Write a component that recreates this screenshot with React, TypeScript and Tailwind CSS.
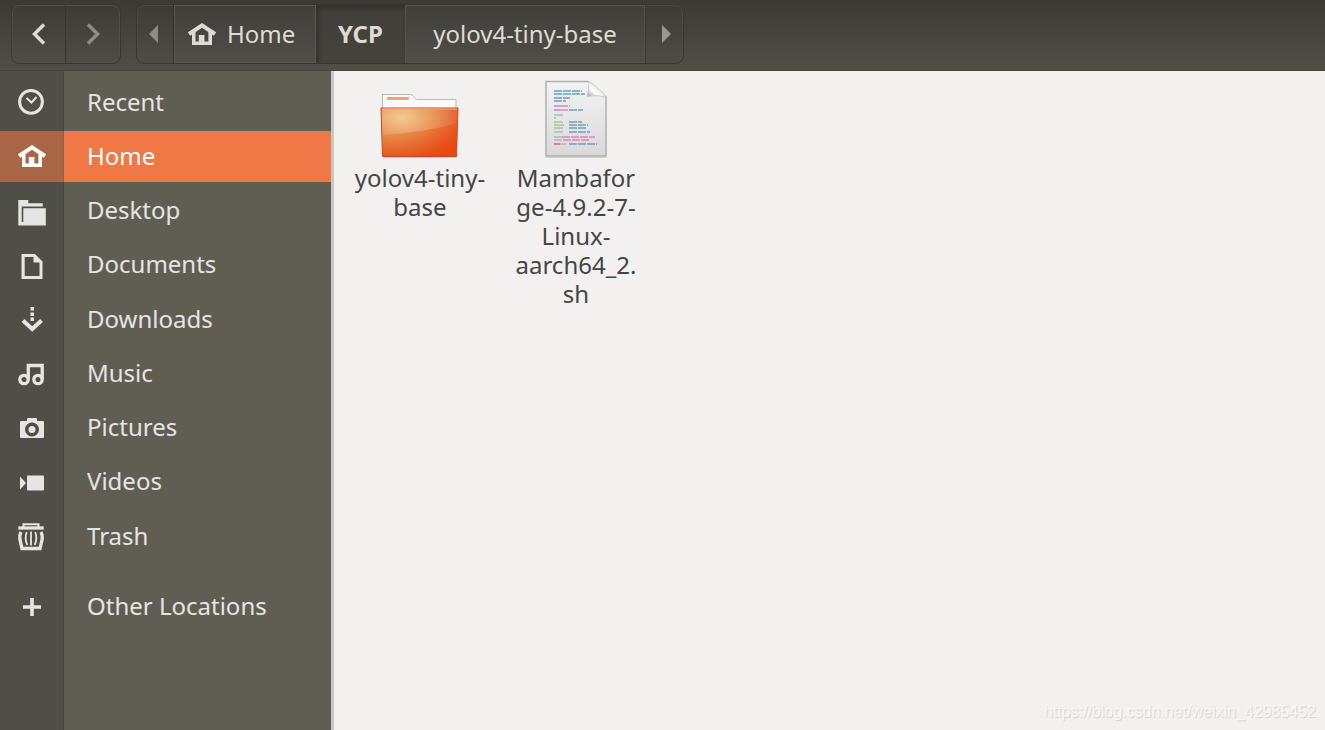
import type { ReactNode } from "react";

const places: { label: string; icon: ReactNode; active?: boolean }[] = [
  {
    label: "Recent",
    icon: (
      <g fill="none" stroke="currentColor">
        <circle cx="16" cy="15.800" r="11.400" strokeWidth="3" />
        <path d="M11.500 12l5 4.500 5-5.500" strokeWidth="2" />
      </g>
    )
  },
  { label: "Home", icon: <HouseShape />, active: true },
  {
    label: "Desktop",
    icon: (
      <path d="M3.300 5h10v3.200h14.400v3.300H6.700V27h1.600V13.300h22.500v17.200H3.300z" />
    )
  },
  {
    label: "Documents",
    icon: <path fillRule="evenodd" d="M6.500 5H20l7.500 7.500V30h-21zM9.700 8v19h14.800V13.500H18.500V8z" />
  },
  {
    label: "Downloads",
    icon: (
      <g>
        <path d="M15.500 4h3.500v3.500h-3.500zM15.500 9.500h3.500V13h-3.500zM15.500 14.500h3.500V18h-3.500z" />
        <path d="M8 17.500l9.200 8.500 9.300-8.500" fill="none" stroke="currentColor" strokeWidth="4" />
      </g>
    )
  },
  {
    label: "Music",
    icon: (
      <g fill="none" stroke="currentColor" strokeWidth="3.300">
        <circle cx="9" cy="22.500" r="4.200" />
        <circle cx="23" cy="22.500" r="4.200" />
        <path d="M13.300 22.500V8.500H27.200V22.500" />
      </g>
    )
  },
  {
    label: "Pictures",
    icon: (
      <path
        fillRule="evenodd"
        d="M6 9h6V7q0-1 1-1h8q1 0 1 1v2h6q1 0 1 1v15q0 1-1 1H6q-1 0-1-1V10q0-1 1-1zM17 10.500a7 7 0 100 14 7 7 0 000-14zM17 14a3.500 3.500 0 110 7 3.500 3.500 0 010-7z"
      />
    )
  },
  {
    label: "Videos",
    icon: <path d="M5 10.500l6 6.500-6 6.500zM13 9.500h15q1 0 1 1v13q0 1-1 1H13q-1 0-1-1v-13q0-1 1-1z" />
  },
  {
    label: "Trash",
    icon: (
      <g fill="none" stroke="currentColor">
        <path d="M8.500 7V4.200h15V7" strokeWidth="2" />
        <path d="M3.300 8h25.400" strokeWidth="3.300" />
        <path d="M6 12q-1.800 3-1 8l2 8.500h18l2-8.500q0.800-5-1-8" strokeWidth="3.300" />
        <path d="M11.800 12q-2.600 6 0.500 13M16 11.500v14M20.200 12q2.600 6-0.500 13" strokeWidth="1.800" />
      </g>
    )
  }
];

const codeLines: [number, number, number, string][] = [
  [8, 11, 28, "#6ba0bd"],
  [8, 14, 31, "#6ba0bd"],
  [8, 18, 16, "#6ba0bd"],
  [8, 21, 12, "#6ba0bd"],
  [8, 26, 6, "#b98bd4"],
  [14, 26, 10, "#d98bb0"],
  [8, 30, 6, "#b98bd4"],
  [14, 30, 8, "#d98bb0"],
  [23, 30, 14, "#6ba0bd"],
  [8, 35, 4, "#8fd48b"],
  [12, 35, 5, "#b5b5b5"],
  [8, 38, 2, "#b5b5b5"],
  [8, 42, 5, "#8fd48b"],
  [13, 42, 4, "#b5b5b5"],
  [23, 42, 13, "#6ba0bd"],
  [8, 45, 5, "#8fd48b"],
  [13, 45, 5, "#b5b5b5"],
  [23, 45, 19, "#6ba0bd"],
  [8, 48, 5, "#8fd48b"],
  [13, 48, 4, "#b5b5b5"],
  [23, 48, 18, "#6ba0bd"],
  [8, 52, 5, "#8fd48b"],
  [13, 52, 4, "#b5b5b5"],
  [23, 52, 21, "#6ba0bd"],
  [8, 57, 8, "#b5b5b5"],
  [16, 57, 33, "#d98bb0"],
  [8, 60, 9, "#b5b5b5"],
  [17, 60, 27, "#d98bb0"],
  [8, 64, 6, "#ee5a5a"],
  [14, 64, 6, "#b5b5b5"],
  [23, 64, 28, "#6ba0bd"]
];

function HouseShape() {
  return (
    <g>
      <path d="M4 16L17 7.300 30 16" fill="none" stroke="currentColor" strokeWidth="4" />
      <path d="M7 14h3.500v9.500h3.300V17h5.600v6.500h4V14h3.600v13H7z" />
    </g>
  );
}

function Icon({ children }: { children: ReactNode }) {
  return (
    <svg viewBox="0 0 33 33" className="size-[33px] shrink-0" fill="currentColor" aria-hidden="true">
      {children}
    </svg>
  );
}

function PlaceRow({ label, icon, active = false }: { label: string; icon: ReactNode; active?: boolean }) {
  return (
    <li>
      <a
        href={`#${label}`}
        className={`grid h-[51px] grid-cols-[64px_1fr] items-center ${
          active
            ? "bg-[linear-gradient(to_right,#a96647_63px,#9c5c3e_63px,#9c5c3e_64px,#f07746_64px)] text-white"
            : "text-[#e5e5e3]"
        }`}
      >
        <span className="pl-[15px]">
          <Icon>{icon}</Icon>
        </span>
        <span className="pb-0.5 pl-[23px]">{label}</span>
      </a>
    </li>
  );
}

function FolderArt() {
  return (
    <svg viewBox="0 0 80 80" className="size-20" aria-hidden="true">
      <defs>
        <radialGradient id="folder" cx="0.27" cy="0.2" r="0.95">
          <stop offset="0" stopColor="#f3cb91" />
          <stop offset="0.45" stopColor="#e8965a" />
          <stop offset="0.85" stopColor="#e8562a" />
          <stop offset="1" stopColor="#e0501c" />
        </radialGradient>
        <linearGradient id="gloss" x1="0" y1="0" x2="1" y2="0.6">
          <stop offset="0" stopColor="#dc7a28" stopOpacity="0.300" />
          <stop offset="1" stopColor="#ea4408" stopOpacity="0.600" />
        </linearGradient>
      </defs>
      <rect x="3" y="77" width="74" height="2" rx="1" fill="#cfcecd" />
      <path d="M2.500 32V15.500h28q2 0 3 2t3 3h39.500V32z" fill="#fafafa" stroke="#b9b8b7" />
      <rect x="7" y="18" width="22" height="3" rx="1" fill="#f0a270" />
      <path d="M1 29h77l-1.500 48.500h-74z" fill="url(#folder)" stroke="#c4481d" />
      <path d="M2 56Q46 53 77 44L76 77H3z" fill="url(#gloss)" />
      <path d="M2 30h75" stroke="#f3b08a" />
    </svg>
  );
}

function ScriptArt() {
  return (
    <svg viewBox="0 0 62 80" className="h-20 w-[62px]" aria-hidden="true">
      <defs>
        <linearGradient id="paper" x1="0" y1="0" x2="0" y2="1">
          <stop offset="0" stopColor="#f3f3f3" />
          <stop offset="1" stopColor="#d9d9d9" />
        </linearGradient>
        <linearGradient id="curl" x1="0.1" y1="0.9" x2="0.8" y2="0.3">
          <stop offset="0" stopColor="#b4b4b4" />
          <stop offset="0.4" stopColor="#ffffff" />
          <stop offset="1" stopColor="#d9d9d9" />
        </linearGradient>
      </defs>
      <path d="M0 78h62v1H0z" fill="#d5d4d3" />
      <path d="M1 2.500h42L61 18V77H1z" fill="url(#paper)" stroke="#aeb0ac" strokeWidth="1.500" />
      {codeLines.map(([x, y, width, color]) => (
        <path key={`${x}-${y}`} d={`M${x + 1} ${y + 1}h${width}`} stroke={color} strokeWidth="1.500" strokeDasharray="8 1" />
      ))}
      <path d="M43 2.500q2 6-1 15 12-2 19 1-2-5-8-9-5-5-10-7z" fill="url(#curl)" stroke="#b9b9b9" strokeWidth="0.700" />
    </svg>
  );
}

function FileItem({ art, name }: { art: ReactNode; name: string }) {
  return (
    <a href="#file" className="flex w-[156px] flex-col items-center text-center leading-[29px] text-[#454545]">
      {art}
      <span className="mt-1 w-[133px] wrap-anywhere">{name}</span>
    </a>
  );
}

function Header() {
  return (
    <header className="flex h-[71px] items-start gap-[15px] border-b border-[#45443d] bg-linear-to-b from-[#3b3a36] to-[#504e46] pt-[4px] pl-[11px] text-[#dfdbd2]">
      <div className="flex h-[60px] rounded-lg border border-[#373631] inset-shadow-[0_0_0_1px_#514f48]">
        <button aria-label="Back" className="flex w-[54px] items-center justify-center border-r border-[#373631]">
          <svg viewBox="0 0 14 22" className="h-[22px] w-[14px]" fill="none" stroke="currentColor" strokeWidth="3.500" aria-hidden="true">
            <path d="M12 1.500L2.500 11l9.500 9.500" />
          </svg>
        </button>
        <button aria-label="Forward" className="flex w-[54px] items-center justify-center text-[#8f8c84]">
          <svg viewBox="0 0 14 22" className="h-[22px] w-[14px]" fill="none" stroke="currentColor" strokeWidth="3.500" aria-hidden="true">
            <path d="M2 1.500L11.500 11 2 20.500" />
          </svg>
        </button>
      </div>
      <nav className="flex h-[60px] rounded-lg border border-[#373631] inset-shadow-[0_0_0_1px_#4c4a43]">
        <button aria-label="Scroll path left" className="flex w-[36px] items-center justify-center pr-1 text-[#8f8c84]">
          <svg viewBox="0 0 10 18" className="h-[18px] w-[10px]" fill="currentColor" aria-hidden="true">
            <path d="M10 0v18L1 9z" />
          </svg>
        </button>
        <button className="flex w-[143px] items-center border-l border-[#302f2b] bg-linear-to-b from-[#403f3a] to-[#504e47] pl-[11px] inset-shadow-[0_0_0_1px_#5b5951]">
          <Icon>
            <HouseShape />
          </Icon>
          <span className="pl-[9px]">Home</span>
        </button>
        <button className="w-[89px] bg-linear-to-b from-[#403f39] to-[#45433c] font-bold inset-shadow-[2px_3px_5px_#302f2b]">
          YCP
        </button>
        <button className="w-[241px] border-r border-[#373631] bg-linear-to-b from-[#403f3a] to-[#504e47] inset-shadow-[0_0_0_1px_#55534b]">
          yolov4-tiny-base
        </button>
        <button aria-label="Scroll path right" className="flex w-[37px] items-center justify-center pl-1 text-[#9b9890]">
          <svg viewBox="0 0 10 18" className="h-[18px] w-[10px]" fill="currentColor" aria-hidden="true">
            <path d="M0 0v18l9-9z" />
          </svg>
        </button>
      </nav>
    </header>
  );
}

export default function App() {
  return (
    <div className="relative flex min-h-screen flex-col bg-[#f2f1ef] font-['Noto_Sans','Open_Sans',sans-serif] text-[24px] leading-[32px]">
      <Header />
      <div className="flex grow">
        <aside className="w-[334px] shrink-0 border-r-3 border-[#c9c7c5] bg-[linear-gradient(to_right,#4f4f47_63px,#46453e_63px,#46453e_64px,#605e52_64px)] pt-[6px]">
          <ul className="flex h-[485px] flex-col justify-between">
            {places.map((place) => (
              <PlaceRow key={place.label} {...place} />
            ))}
          </ul>
          <ul className="mt-[19px]">
            <PlaceRow
              label="Other Locations"
              icon={<path d="M15.200 8h3.600v7.200H26v3.600h-7.200V26h-3.600v-7.200H8v-3.600h7.200z" />}
            />
          </ul>
        </aside>
        <main className="flex grow items-start pt-[8px] pl-2">
          <FileItem art={<FolderArt />} name="yolov4-tiny-base" />
          {/* zero-width space keeps the extension together on its own line */}
          <FileItem art={<ScriptArt />} name={"Mambaforge-4.9.2-7-Linux-aarch64_2.\u200bsh"} />
        </main>
      </div>
      <p className="absolute right-[9px] bottom-[6px] font-['Liberation_Sans',sans-serif] text-[16px] leading-6 text-[#f8f8f7] [text-shadow:1px_1px_1px_#d0d0d0]">
        https://blog.csdn.net/weixin_42985452
      </p>
    </div>
  );
}
